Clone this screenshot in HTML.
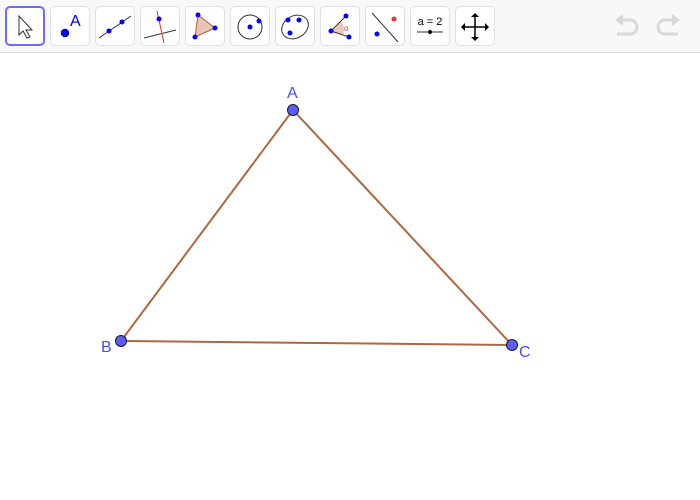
<!DOCTYPE html>
<html><head><style>
body{margin:0;width:700px;height:500px;background:#fff;overflow:hidden;font-family:"Liberation Sans",sans-serif}
#tb{position:absolute;left:0;top:0;width:700px;height:52px;background:#f8f8f8;border-bottom:1px solid #ddd}
.b{position:absolute;top:6px;width:38px;height:38px;background:#fff;border:1px solid #e0e0e0;border-radius:5px}
.b svg{position:absolute;left:0;top:0}
</style></head><body>
<div id="tb">
<div class="b" style="left:5px;border:2px solid #6b6bff;width:36px;height:36px"><svg width="36" height="36"><path d="M12 8 L12 27 L16 23 L20 30 L23 29 L19 22 L25 22 Z" fill="#fff" stroke="#333" stroke-width="1"/></svg></div>
<div class="b" style="left:50px"><svg width="38" height="38"><circle cx="14" cy="26" r="4" fill="#00f" stroke="#000" stroke-width=".5"/><text x="19" y="19" font-size="16" fill="#00f" font-family="Liberation Sans">A</text></svg></div>
<div class="b" style="left:95px"><svg width="38" height="38"><line x1="3" y1="31" x2="35" y2="9" stroke="#333"/><circle cx="13" cy="24" r="2.5" fill="#00f"/><circle cx="26" cy="15" r="2.5" fill="#00f"/></svg></div>
<div class="b" style="left:140px"><svg width="38" height="38"><line x1="3" y1="31" x2="35" y2="23" stroke="#333"/><line x1="16" y1="4" x2="23" y2="36" stroke="#e33"/><circle cx="18" cy="12" r="2.5" fill="#00f"/></svg></div>
<div class="b" style="left:185px"><svg width="38" height="38"><path d="M12 8 L29 21 L9 30 Z" fill="#e8c4b4" stroke="#b06040"/><circle cx="12" cy="8" r="2.5" fill="#00f"/><circle cx="29" cy="21" r="2.5" fill="#00f"/><circle cx="9" cy="30" r="2.5" fill="#00f"/></svg></div>
<div class="b" style="left:230px"><svg width="38" height="38"><circle cx="19" cy="20" r="12" fill="none" stroke="#333"/><circle cx="19" cy="20" r="2.5" fill="#00f"/><circle cx="28" cy="14" r="2.5" fill="#00f"/></svg></div>
<div class="b" style="left:275px"><svg width="38" height="38"><ellipse cx="19" cy="20" rx="14" ry="11" transform="rotate(-30 19 20)" fill="none" stroke="#333"/><circle cx="12" cy="13" r="2.5" fill="#00f"/><circle cx="23" cy="13" r="2.5" fill="#00f"/><circle cx="14" cy="26" r="2.5" fill="#00f"/></svg></div>
<div class="b" style="left:320px"><svg width="38" height="38"><path d="M10 24 L20 15 A12 12 0 0 1 22 28 Z" fill="#f0c8b8"/><line x1="10" y1="24" x2="25" y2="9" stroke="#333"/><line x1="10" y1="24" x2="28" y2="30" stroke="#333"/><circle cx="25" cy="9" r="2.5" fill="#00f"/><circle cx="10" cy="24" r="2.5" fill="#00f"/><circle cx="28" cy="30" r="2.5" fill="#00f"/><text x="23" y="24" font-size="8" fill="#e33">o</text></svg></div>
<div class="b" style="left:365px"><svg width="38" height="38"><line x1="6" y1="6" x2="32" y2="35" stroke="#333"/><circle cx="28" cy="12" r="2.5" fill="#e33"/><circle cx="11" cy="27" r="2.5" fill="#00f"/></svg></div>
<div class="b" style="left:410px"><svg width="38" height="38"><text x="19" y="18" font-size="11" text-anchor="middle" fill="#000" font-family="Liberation Sans">a = 2</text><line x1="6" y1="25" x2="32" y2="25" stroke="#333"/><circle cx="19" cy="25" r="2" fill="#000"/></svg></div>
<div class="b" style="left:455px"><svg width="38" height="38"><path d="M19 8V32M7 20H31" stroke="#000" stroke-width="1.5"/><path d="M19 6l-4 4h8zM19 34l-4-4h8zM5 20l4-4v8zM33 20l-4-4v8z" fill="#000"/></svg></div>
<svg style="position:absolute;left:610px;top:10px" width="80" height="32"><g fill="none" stroke="#d8d8d8" stroke-width="3"><path d="M10 10 H20 A7 7 0 0 1 20 24 H7"/><path d="M65 10 H55 A7 7 0 0 0 55 24 H68"/></g><path d="M5 10 L13 4 V16Z M70 10 L62 4 V16Z" fill="#d8d8d8"/></svg>
</div>
<svg style="position:absolute;left:0;top:0" width="700" height="500">
<g stroke="#b0673f" stroke-width="2" fill="none"><path d="M293 110 L121 341 L512 345 Z"/></g>
<g fill="#5c5cff" stroke="#1a1a1a" stroke-width="1"><circle cx="293" cy="110" r="5.5"/><circle cx="121" cy="341" r="5.5"/><circle cx="512" cy="345" r="5.5"/></g>
<g fill="#4a4aff" font-size="16" font-family="Liberation Sans"><text x="287" y="98">A</text><text x="101" y="352">B</text><text x="519" y="357">C</text></g>
</svg>
</body></html>
